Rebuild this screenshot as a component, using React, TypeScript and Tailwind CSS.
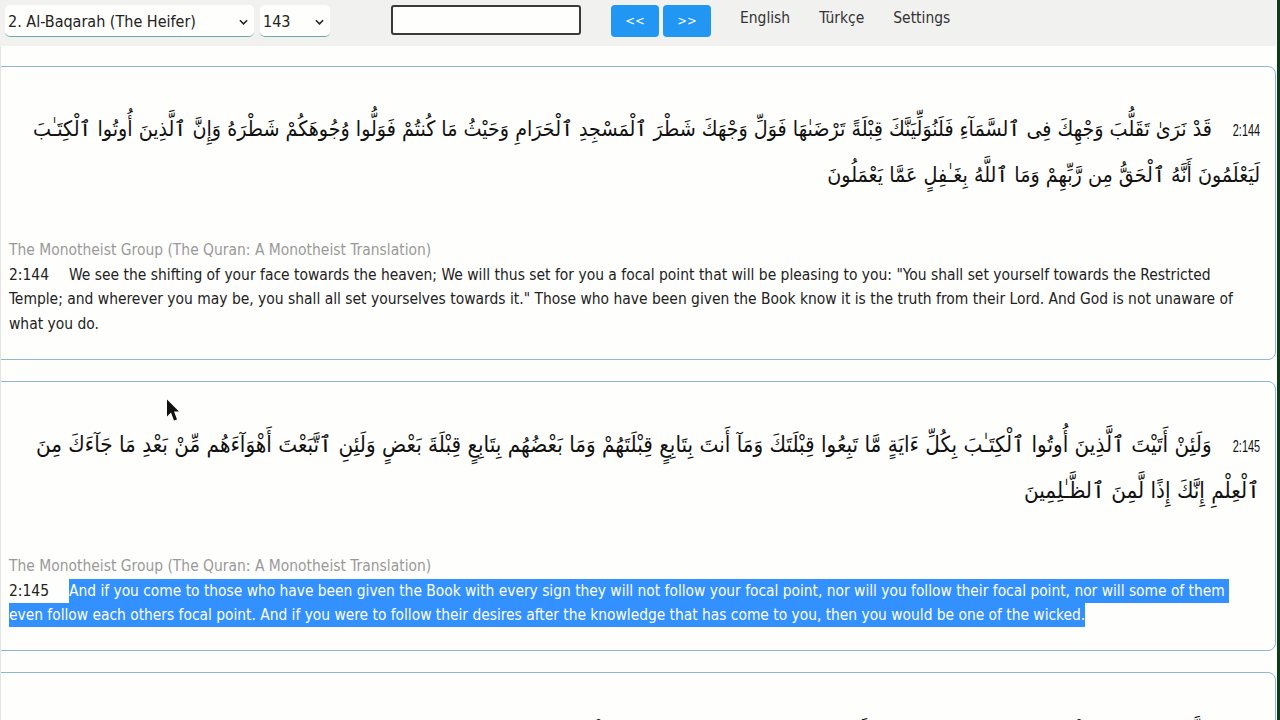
import { useState } from "react";

const TRANSLATOR = "The Monotheist Group (The Quran: A Monotheist Translation)";

function Chevron() {
  return (
    <svg viewBox="0 0 10 6" className="h-[6px] w-[9px] shrink-0" fill="none" stroke="#222" strokeWidth="1.7">
      <path d="M1 1l4 4 4-4" />
    </svg>
  );
}

function FakeSelect({ label, className }: { label: string; className: string }) {
  return (
    <div className={`flex h-[32px] items-center justify-between rounded-[5px] border-b border-[#6fa8a8] bg-[#fefefc] pl-[3px] pr-[6px] pt-[2px] text-[16px] text-[#222] ${className}`}>
      <span>{label}</span>
      <Chevron />
    </div>
  );
}

function Header() {
  const [query, setQuery] = useState("");
  return (
    <header className="flex h-[46px] items-start bg-[#f1f1f0] pt-[5px]">
      <FakeSelect label="2. Al-Baqarah (The Heifer)" className="ml-[5px] w-[249px]" />
      <FakeSelect label="143" className="ml-[6px] w-[70px]" />
      <input
        value={query}
        onChange={(e) => setQuery(e.target.value)}
        className="ml-[61px] h-[30px] w-[190px] rounded-[3px] border-2 border-[#3a3a3a] bg-[#fefefc]"
      />
      <button className="ml-[30px] h-[32px] w-[48px] rounded-[4px] bg-[#2196f3] text-[13px] text-white">&lt;&lt;</button>
      <button className="ml-[4px] h-[32px] w-[48px] rounded-[4px] bg-[#2196f3] text-[13px] text-white">&gt;&gt;</button>
      <nav className="ml-[29px] flex gap-[29px] pt-[2px] text-[15.45px] text-[#333]">
        <a>English</a>
        <a>Türkçe</a>
        <a>Settings</a>
      </nav>
    </header>
  );
}

function Verse({
  num,
  arabic,
  arabicClass,
  translation,
  selected,
  className,
}: {
  num: string;
  arabic: string;
  arabicClass: string;
  translation: string;
  selected?: boolean;
  className: string;
}) {
  return (
    <section className={`-ml-[8px] rounded-[8px] border border-[#8db8d4] pl-[16px] pr-[15px] ${className}`}>
      <p dir="rtl" className={`mt-[39px] leading-[46px] text-[#111] [font-family:'DejaVu_Sans_Condensed','DejaVu_Sans',sans-serif] ${arabicClass}`}>
        <span className="ml-[2px] inline-block origin-right scale-x-[.68] text-[16px] leading-none [font-family:'Liberation_Sans',sans-serif]">{num}</span> {arabic}
      </p>
      <p className="mt-[40px] leading-[24.6px] text-[#999]">{TRANSLATOR}</p>
      <p className="leading-[24.6px] text-[#222]">
        <span className="mr-[20px]">{num}</span>
        {selected ? (
          <span className="bg-[#3390ff] py-[3px] text-[15.37px] text-white [box-decoration-break:clone]">{translation}</span>
        ) : (
          translation
        )}
      </p>
    </section>
  );
}

export default function App() {
  return (
    <div className="relative h-[720px] overflow-hidden bg-[#fefefc] pr-[4px] text-[15.45px] [font-family:'DejaVu_Sans_Condensed','DejaVu_Sans',sans-serif] [font-stretch:condensed]">
      <Header />
      <main className="flex flex-col gap-[21px] pt-[20px]">
        <Verse
          num="2:144"
          className="h-[294px]"
          arabicClass="h-[92px] text-[21.25px]"
          arabic="قَدْ نَرَىٰ تَقَلُّبَ وَجْهِكَ فِى ٱلسَّمَآءِ فَلَنُوَلِّيَنَّكَ قِبْلَةً تَرْضَىٰهَا فَوَلِّ وَجْهَكَ شَطْرَ ٱلْمَسْجِدِ ٱلْحَرَامِ وَحَيْثُ مَا كُنتُمْ فَوَلُّوا وُجُوهَكُمْ شَطْرَهُ وَإِنَّ ٱلَّذِينَ أُوتُوا ٱلْكِتَـٰبَ لَيَعْلَمُونَ أَنَّهُ ٱلْحَقُّ مِن رَّبِّهِمْ وَمَا ٱللَّهُ بِغَـٰفِلٍ عَمَّا يَعْمَلُونَ"
          translation={'We see the shifting of your face towards the heaven; We will thus set for you a focal point that will be pleasing to you: "You shall set yourself towards the Restricted Temple; and wherever you may be, you shall all set yourselves towards it." Those who have been given the Book know it is the truth from their Lord. And God is not unaware of what you do.'}
        />
        <Verse
          num="2:145"
          className="h-[270px]"
          selected
          arabicClass="h-[93px] text-[22.25px]"
          arabic="وَلَئِنْ أَتَيْتَ ٱلَّذِينَ أُوتُوا ٱلْكِتَـٰبَ بِكُلِّ ءَايَةٍ مَّا تَبِعُوا قِبْلَتَكَ وَمَآ أَنتَ بِتَابِعٍ قِبْلَتَهُمْ وَمَا بَعْضُهُم بِتَابِعٍ قِبْلَةَ بَعْضٍ وَلَئِنِ ٱتَّبَعْتَ أَهْوَآءَهُم مِّنْ بَعْدِ مَا جَآءَكَ مِنَ ٱلْعِلْمِ إِنَّكَ إِذًا لَّمِنَ ٱلظَّـٰلِمِينَ"
          translation={"And if you come to those who have been given the Book with every sign they will not follow your focal point, nor will you follow their focal point, nor will some of them\u00a0 even follow each others focal point. And if you were to follow their desires after the knowledge that has come to you, then you would be one of the wicked."}
        />
        <Verse
          num="2:146"
          className="h-[270px]"
          arabicClass="h-[92px] text-[21.25px]"
          arabic="ٱلَّذِينَ ءَاتَيْنَـٰهُمُ ٱلْكِتَـٰبَ يَعْرِفُونَهُ كَمَا يَعْرِفُونَ أَبْنَآءَهُمْ وَإِنَّ فَرِيقًا مِّنْهُمْ لَيَكْتُمُونَ ٱلْحَقَّ وَهُمْ يَعْلَمُونَ"
          translation="Those to whom We have given the Book recognize it as they recognize their own children."
        />
      </main>
      {/* mouse pointer caught in the screen recording */}
      <svg viewBox="0 0 12 24" className="absolute left-[167px] top-[399px] h-[25px] w-[12px]" fill="#111">
        <path d="M0 0v17l4-4 3 8 3-1-3-8h5z" />
      </svg>
      <div className="absolute bottom-0 left-0 top-[46px] w-[1px] bg-[#e4e4e2]" />
      <div className="absolute bottom-0 right-0 top-0 w-[3px] bg-[#0b3d1a]" />
    </div>
  );
}
